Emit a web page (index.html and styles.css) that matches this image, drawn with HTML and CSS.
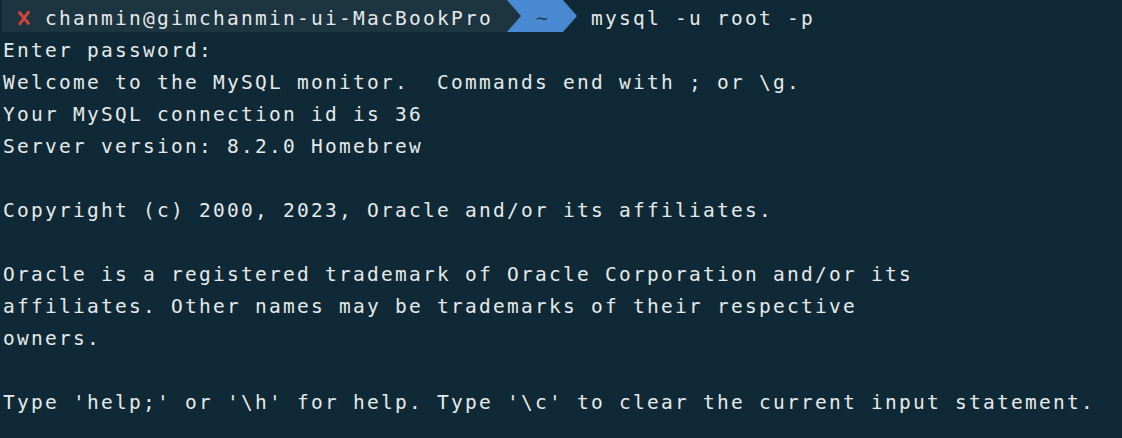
FILE: index.html
```html
<!DOCTYPE html>
<html lang="en">
<head>
<meta charset="utf-8">
<title>Terminal</title>
<link rel="stylesheet" href="styles.css">
</head>
<body>
<main class="term">
  <div class="prompt">
    <span class="seg-host"><span class="cell"></span><span class="cell err"><svg viewBox="0 0 14 16" width="14" height="16"><path d="M2.5 2.5 L11.5 13.5 M11.5 2.2 L2.8 13.8" stroke="#d8433b" stroke-width="2.8" stroke-linecap="round" fill="none"/></svg></span> chanmin@gimchanmin-ui-MacBookPro </span><span class="seg-dir"><span class="seg-dir-fill"> ~ </span></span><span class="cmd"> mysql -u root -p</span>
  </div>
<pre class="out">Enter password:
Welcome to the MySQL monitor.  Commands end with ; or \g.
Your MySQL connection id is 36
Server version: 8.2.0 Homebrew

Copyright (c) 2000, 2023, Oracle and/or its affiliates.

Oracle is a registered trademark of Oracle Corporation and/or its
affiliates. Other names may be trademarks of their respective
owners.

Type 'help;' or '\h' for help. Type '\c' to clear the current input statement.</pre>
</main>
</body>
</html>
```
FILE: styles.css
```css
html, body {
  margin: 0;
  padding: 0;
  background: #0f2a36;
}
body {
  width: 1122px;
  height: 438px;
  overflow: hidden;
}
.term {
  padding-left: 3px;
  font-family: "DejaVu Sans Mono", monospace;
  font-size: 19.5px;
  letter-spacing: 2.26px;
  color: #e6e9ea;
}
.prompt {
  display: flex;
  height: 32px;
  margin-left: -1px;
  white-space: pre;
}
.seg-host {
  display: flex;
  box-sizing: border-box;
  height: 32px;
  padding-left: 1px;
  padding-top: 3px;
  line-height: 32px;
  background: #1c3541;
}
.cell {
  display: inline-block;
  width: 14px;
  height: 29px;
}
.err {
  display: inline-flex;
  align-items: flex-start;
}
.err svg {
  display: block;
  margin-top: 7px;
}
.seg-dir {
  display: block;
  width: 70px;
  height: 32px;
  background: linear-gradient(to right, #1c3541 14px, transparent 14px);
}
.seg-dir-fill {
  display: flex;
  justify-content: center;
  box-sizing: border-box;
  width: 70px;
  height: 32px;
  padding-top: 3px;
  padding-left: 2px;
  line-height: 32px;
  background: #4a8ad2;
  color: #1b3a4f;
  clip-path: polygon(0 0, 56px 0, 70px 50%, 56px 100%, 0 100%, 14px 50%);
}
.cmd {
  display: block;
  box-sizing: border-box;
  height: 32px;
  padding-top: 3px;
  line-height: 32px;
}
.out {
  margin: 0;
  padding-top: 3px;
  font: inherit;
  line-height: 32px;
  white-space: pre;
}
```
